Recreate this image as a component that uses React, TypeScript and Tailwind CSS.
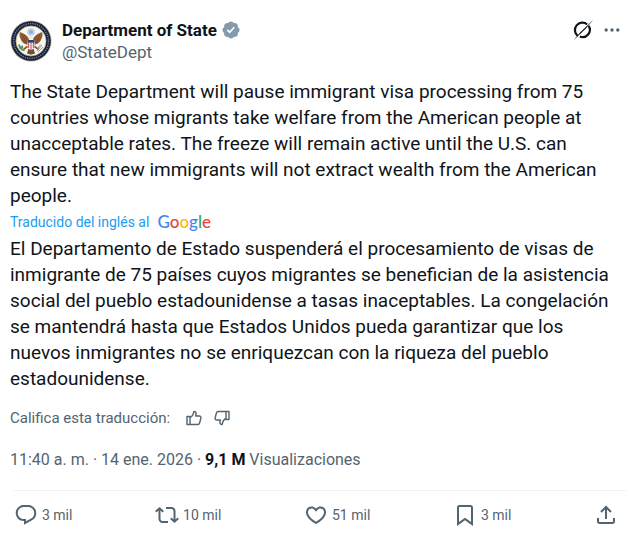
import React, { useState } from "react";

interface IconProps {
  className?: string;
  path: string;
}

interface ActionProps {
  label: string;
  icon: string;
  count: string;
}

const icons = {
  reply:
    "M1.751 10c0-4.42 3.584-8 8.005-8h4.366c4.49 0 8.129 3.64 8.129 8.13 0 2.96-1.607 5.68-4.196 7.11l-8.054 4.46v-3.69h-.067c-4.49.1-8.183-3.51-8.183-8.01zm8.005-6c-3.317 0-6.005 2.69-6.005 6 0 3.37 2.77 6.08 6.138 6.01l.351-.01h1.761v2.3l5.087-2.81c1.951-1.08 3.163-3.13 3.163-5.36 0-3.39-2.744-6.13-6.129-6.13H9.756z",
  repost:
    "M4.5 3.88l4.432 4.14-1.364 1.46L5.5 7.55V16c0 1.1.896 2 2 2H13v2H7.5c-2.209 0-4-1.79-4-4V7.55L1.432 9.48.068 8.02 4.5 3.88zM16.5 6H11V4h5.5c2.209 0 4 1.79 4 4v8.45l2.068-1.93 1.364 1.46-4.432 4.14-4.432-4.14 1.364-1.46 2.068 1.93V8c0-1.1-.896-2-2-2z",
  like: "M16.697 5.5c-1.222-.06-2.679.51-3.89 2.16l-.805 1.09-.806-1.09C9.984 6.01 8.526 5.44 7.304 5.5c-1.243.07-2.349.78-2.91 1.91-.552 1.12-.633 2.78.479 4.82 1.074 1.97 3.257 4.27 7.129 6.61 3.87-2.34 6.052-4.64 7.126-6.61 1.111-2.04 1.03-3.7.477-4.82-.561-1.13-1.666-1.84-2.908-1.91zm4.187 7.69c-1.351 2.48-4.001 5.12-8.379 7.67l-.503.3-.504-.3c-4.379-2.55-7.029-5.19-8.382-7.67-1.36-2.5-1.41-4.86-.514-6.67.887-1.79 2.647-2.91 4.601-3.01 1.651-.09 3.368.56 4.798 2.01 1.429-1.45 3.146-2.1 4.796-2.01 1.954.1 3.714 1.22 4.601 3.01.896 1.81.846 4.17-.514 6.67z",
  bookmark:
    "M4 4.5C4 3.12 5.119 2 6.5 2h11C18.881 2 20 3.12 20 4.5v18.44l-8-5.71-8 5.71V4.5zM6.5 4c-.276 0-.5.22-.5.5v14.56l6-4.29 6 4.29V4.5c0-.28-.224-.5-.5-.5h-11z",
  share:
    "M12 2.59l5.7 5.7-1.41 1.42L13 6.41V16h-2V6.41l-3.3 3.3-1.41-1.42L12 2.59zM21 15l-.02 3.51c0 1.38-1.12 2.49-2.5 2.49H5.5C4.11 21 3 19.88 3 18.5V15h2v3.5c0 .28.22.5.5.5h12.98c.28 0 .5-.22.5-.5L19 15h2z",
  more: "M3 12c0-1.1.9-2 2-2s2 .9 2 2-.9 2-2 2-2-.9-2-2zm9 2c1.1 0 2-.9 2-2s-.9-2-2-2-2 .9-2 2 .9 2 2 2zm7 0c1.1 0 2-.9 2-2s-.9-2-2-2-2 .9-2 2 .9 2 2 2z",
};

const actions: ActionProps[] = [
  { label: "Responder", icon: icons.reply, count: "3 mil" },
  { label: "Repostear", icon: icons.repost, count: "10 mil" },
  { label: "Me gusta", icon: icons.like, count: "51 mil" },
  { label: "Guardar", icon: icons.bookmark, count: "3 mil" },
];

const googleLetters = [
  { letter: "G", color: "text-[#4285f4]" },
  { letter: "o", color: "text-[#ea4335]" },
  { letter: "o", color: "text-[#fbbc05]" },
  { letter: "g", color: "text-[#4285f4]" },
  { letter: "l", color: "text-[#34a853]" },
  { letter: "e", color: "text-[#ea4335]" },
];

const Icon: React.FC<IconProps> = ({ className, path }) => (
  <svg viewBox="0 0 24 24" fill="currentColor" className={className} aria-hidden="true">
    <path d={path} />
  </svg>
);

const Seal = () => (
  <svg viewBox="0 0 42 42" className="size-[42px] shrink-0" role="img" aria-label="Department of State">
    <circle cx="21" cy="21" r="20.5" fill="#b9b48f" />
    <circle cx="21" cy="21" r="19.8" fill="#18233f" />
    <circle cx="21" cy="21" r="17.4" fill="none" stroke="#7d8497" strokeWidth="1.4" strokeDasharray="1.2 1.1" />
    <circle cx="21" cy="21" r="15" fill="#f7f6f0" stroke="#c9b878" strokeWidth="0.7" />
    {/* glory */}
    <circle cx="21" cy="12" r="3.8" fill="#bdd2ea" />
    <circle cx="21" cy="12" r="2" fill="#8fb0d8" />
    {/* wings */}
    <path
      d="M19 19c-1-3-4-5-9-7-1 3-.5 5 .5 6.500l.8 2 1.200 1.800 1.800 1.500 3.700 1.200zM23 19c1-3 4-5 9-7 1 3 .5 5-.5 6.500l-.8 2-1.200 1.800-1.800 1.500-3.700 1.200z"
      fill="#9a6036"
    />
    <path
      d="M11.500 14l5 9M14 14.500l3.500 6M11 17.500l4 5M30.500 14l-5 9M28 14.500l-3.500 6M31 17.500l-4 5"
      stroke="#633a20"
      strokeWidth="0.7"
    />
    {/* tail and legs */}
    <path d="M18 26l-4.500 3.500M24 26l4.500 3.500" stroke="#8a5530" strokeWidth="1.6" />
    <path d="M18.500 28.500l-1.500 5 4 1.300 4-1.300-1.500-5z" fill="#7a4a30" />
    <circle cx="21" cy="17.3" r="1.7" fill="#efe8d6" />
    {/* shield */}
    <path d="M17.500 20h7v6c0 2-2 3.500-3.500 4.200-1.500-.7-3.500-2.200-3.500-4.200z" fill="#fff" />
    <path d="M18.700 22v6M21 22v8M23.300 22v6" stroke="#b8423c" strokeWidth="1" />
    <path d="M17.500 20h7v2.600h-7z" fill="#2d4377" />
    {/* olive branch and arrows */}
    <path d="M9 24.500c.5 3 2 5 5.500 6M9 27.500l3 .5M12 25.500l.5 2.500" fill="none" stroke="#4f9459" strokeWidth="1.8" />
    <path d="M27 31l5-6M28 32l5-5M27.500 29l3-4.500" stroke="#8e9090" strokeWidth="0.9" />
  </svg>
);

const VerifiedBadge = () => (
  <svg viewBox="0 0 22 22" className="size-5 text-[#829aab]" fill="currentColor" role="img" aria-label="Cuenta verificada">
    <path d="M20.396 11c-.018-.646-.215-1.275-.57-1.816-.354-.54-.852-.972-1.438-1.246.223-.607.27-1.264.14-1.897-.131-.634-.437-1.218-.882-1.687-.47-.445-1.053-.75-1.687-.882-.633-.13-1.29-.083-1.897.14-.273-.587-.704-1.086-1.245-1.44S11.647 1.62 11 1.604c-.646.017-1.273.213-1.813.568s-.969.854-1.24 1.44c-.608-.223-1.267-.272-1.902-.14-.635.13-1.22.436-1.69.882-.445.47-.749 1.055-.878 1.688-.13.633-.08 1.29.144 1.896-.587.274-1.087.705-1.443 1.245-.356.54-.555 1.17-.574 1.817.02.647.218 1.276.574 1.817.356.54.856.972 1.443 1.245-.224.606-.274 1.263-.144 1.896.13.634.433 1.218.877 1.688.47.443 1.054.747 1.687.878.633.132 1.29.084 1.897-.136.274.586.705 1.084 1.246 1.439.54.354 1.17.551 1.816.569.647-.016 1.276-.213 1.817-.567s.972-.854 1.245-1.44c.604.239 1.266.296 1.903.164.636-.132 1.22-.447 1.68-.907.46-.46.776-1.044.908-1.681s.075-1.299-.165-1.903c.586-.274 1.084-.705 1.439-1.246.354-.54.551-1.17.569-1.816zM9.662 14.85l-3.429-3.428 1.293-1.302 2.072 2.072 4.4-4.794 1.347 1.246z" />
  </svg>
);

const ThumbIcon: React.FC<{ down?: boolean }> = ({ down }) => (
  <svg
    viewBox="0 0 16 16"
    className={down ? "size-4 rotate-180" : "size-4"}
    fill="none"
    stroke="currentColor"
    strokeWidth="1.4"
    strokeLinejoin="round"
    aria-hidden="true"
  >
    <path d="M1 6.500h3v8H1zM4 7.500c2-1 3.500-3 3.800-6 1.700 0 2.500 1.200 2.300 2.500L9.700 6h3.700c1.100 0 1.800.9 1.500 2l-1.300 5c-.2.900-1 1.500-1.900 1.500H4" />
  </svg>
);

const App: React.FC = () => {
  const [rating, setRating] = useState<"up" | "down" | null>(null);

  return (
    <article className="bg-white px-[10px] pt-[19px] font-[Roboto,'Liberation_Sans',sans-serif] text-[#0f1419]">
      <header className="flex items-center gap-[10px]">
        <Seal />
        <div className="flex-1">
          <div className="flex items-center gap-1">
            <h1 className="text-[17px] leading-[22px] font-bold">Department of State</h1>
            <VerifiedBadge />
          </div>
          <a href="#StateDept" className="block text-[17px] leading-[22px] text-[#536471]">
            @StateDept
          </a>
        </div>
        <div className="flex items-center gap-2 self-start pr-2">
          <button type="button" aria-label="Explicar esta publicación">
            <svg viewBox="0 0 24 24" className="size-[22px]" fill="none" stroke="currentColor" strokeWidth="2.4">
              <path d="M6.200 18.500A8 8 0 0 1 16.500 5.800M18.200 7.500A8 8 0 0 1 8.500 19.200" />
              <path d="M1.500 23.500l7.300-8.800L23.500.5l-8.300 9.800z" fill="currentColor" stroke="none" />
            </svg>
          </button>
          <button type="button" aria-label="Más opciones" className="text-[#536471]">
            <Icon path={icons.more} className="size-5" />
          </button>
        </div>
      </header>

      <p lang="en" className="mt-4 pr-5 text-[19px] leading-[26px]">
        The State Department will pause immigrant visa processing from 75 countries whose migrants take welfare from
        the American people at unacceptable rates. The freeze will remain active until the U.S. can ensure that new
        immigrants will not extract wealth from the American people.
      </p>

      <div className="flex items-center gap-2 pb-px leading-[26px]">
        <a href="#traduccion" className="text-[14px] text-[#1d9bf0]">
          Traducido del inglés al
        </a>
        <span className="font-[Lato,sans-serif] text-[17px] leading-6 font-medium">
          {googleLetters.map((item, i) => (
            <span key={i} className={item.color}>
              {item.letter}
            </span>
          ))}
        </span>
      </div>

      <p lang="es" className="pr-5 text-[19px] leading-[26px]">
        El Departamento de Estado suspenderá el procesamiento de visas de inmigrante de 75 países cuyos migrantes se
        benefician de la asistencia social del pueblo estadounidense a tasas inaceptables. La congelación se mantendrá
        hasta que Estados Unidos pueda garantizar que los nuevos inmigrantes no se enriquezcan con la riqueza del
        pueblo estadounidense.
      </p>

      <div className="mt-4 flex items-center gap-3 text-[15px] leading-5 text-[#536471]">
        <span className="pr-1">Califica esta traducción:</span>
        <button type="button" aria-label="Buena traducción" aria-pressed={rating === "up"} onClick={() => setRating("up")}>
          <ThumbIcon />
        </button>
        <button
          type="button"
          aria-label="Mala traducción"
          aria-pressed={rating === "down"}
          onClick={() => setRating("down")}
        >
          <ThumbIcon down />
        </button>
      </div>

      <div className="mt-5 pb-[18px] text-[16px] leading-6 text-[#536471]">
        <time dateTime="2026-01-14T11:40">11:40 a. m. · 14 ene. 2026</time> ·{" "}
        <span className="font-bold text-[#0f1419]">9,1 M</span> Visualizaciones
      </div>

      <footer className="mx-1 flex items-center justify-between border-t border-[#eff3f4] pt-3 pr-2 text-[14px] text-[#536471]">
        {actions.map((action) => (
          <button key={action.label} type="button" aria-label={action.label} className="flex items-center gap-1">
            <Icon path={action.icon} className="size-6" />
            <span>{action.count}</span>
          </button>
        ))}
        <button type="button" aria-label="Compartir">
          <Icon path={icons.share} className="size-6" />
        </button>
      </footer>
    </article>
  );
};

export default App;
